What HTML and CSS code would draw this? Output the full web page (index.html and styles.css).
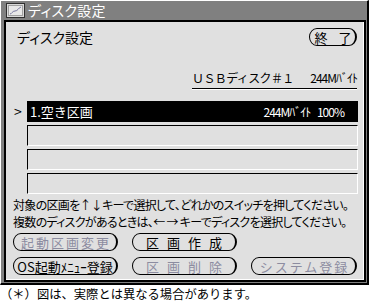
FILE: index.html
```html
<!DOCTYPE html>
<html lang="ja">
<head>
<meta charset="UTF-8">
<meta name="viewport" content="width=device-width, initial-scale=1.0">
<link rel="stylesheet" href="styles.css">
<title>ディスク設定</title>
</head>
<body>
<div class="window">
  <div class="titlebar">
    <span class="title-icon">
      <svg width="19" height="15" viewBox="0 0 19 15">
        <rect x="0.5" y="0.5" width="18" height="14" fill="#d8d8d8" stroke="#303030"/>
        <rect x="2.5" y="2.5" width="14" height="10" fill="#e8e8e8" stroke="#a0a0a0"/>
        <path d="M4 11 C6 11 6 8 9 8 C12 8 12 5 15 4" fill="none" stroke="#7878a0" stroke-width="1"/>
      </svg>
    </span>
    <span class="title">ディスク設定</span>
  </div>

  <div class="panel">
    <div class="panel-head">
      <h1>ディスク設定</h1>
      <button class="btn btn-exit">終　了</button>
    </div>

    <div class="disk-label">
      <span>ＵＳＢディスク＃１</span>
      <span class="size">244Mﾊﾞｲﾄ</span>
    </div>

    <ul class="parts">
      <li class="part selected">
        <span class="mark">&gt;</span>
        <div class="box"><span>1.空き区画</span><span class="size">244Mﾊﾞｲﾄ 100%</span></div>
      </li>
      <li class="part"><span class="mark"></span><div class="box"></div></li>
      <li class="part"><span class="mark"></span><div class="box"></div></li>
      <li class="part"><span class="mark"></span><div class="box"></div></li>
    </ul>

    <p class="help">対象の区画を↑↓キーで選択して、どれかのスイッチを押してください。<br>複数のディスクがあるときは、← → キーでディスクを選択してください。</p>

    <div class="buttons">
      <button class="btn wide disabled">起動区画変更</button>
      <button class="btn spaced">区画作成</button>
      <span></span>
      <button class="btn btn-os">OS起動ﾒﾆｭｰ登録</button>
      <button class="btn spaced disabled">区画削除</button>
      <button class="btn wide disabled">システム登録</button>
    </div>
  </div>
</div>
<p class="note">（＊）図は、実際とは異なる場合があります。</p>
</body>
</html>
```

FILE: styles.css
```css
* {
    box-sizing: border-box;
}

body {
    margin: 0;
    background: #fff;
    font-family: "Noto Sans CJK JP", sans-serif;
    color: #000;
}

.window {
    width: 369px;
    height: 285px;
    background: #808080;
    border-top: 1px solid #fff;
    border-left: 1px solid #fff;
    border-right: 2px solid #000;
    border-bottom: 2px solid #000;
    padding: 0 1px 1px 3px;
    display: flex;
    flex-direction: column;
    overflow: hidden;
}

.titlebar {
    height: 19px;
    flex: none;
    display: flex;
    align-items: center;
    gap: 3px;
    padding-left: 2px;
}

.title-icon {
    display: flex;
}

.title {
    color: #fff;
    font-size: 14px;
    line-height: 19px;
    letter-spacing: 0.3px;
    font-feature-settings: "palt";
}

.panel {
    flex: 1;
    background: #e0e0e0;
    border: 2px solid #000;
    box-shadow: inset -1px -1px 0 #fff;
    padding: 6px 0 0 7px;
}

.panel-head {
    display: flex;
    justify-content: space-between;
    align-items: center;
    height: 18px;
    padding-right: 7px;
}

h1 {
    margin: 0 0 0 4px;
    font-size: 14px;
    font-weight: 400;
    line-height: 18px;
    font-feature-settings: "palt";
}

.btn {
    height: 18px;
    padding: 0;
    background: #e0e0e0;
    border: 1px solid #000;
    border-right-width: 2px;
    border-radius: 8px / 9px;
    font-family: inherit;
    font-size: 13px;
    line-height: 15px;
    white-space: nowrap;
    overflow: hidden;
    color: #000;
}

.btn-exit {
    width: 48px;
    letter-spacing: -1px;
}

.btn.wide {
    letter-spacing: 2px;
    text-indent: 2px;
}

.btn.spaced {
    letter-spacing: 8px;
    text-indent: 8px;
}

.btn.disabled {
    color: #8c8ca0;
}

.btn-os {
    font-feature-settings: "palt";
}

.disk-label {
    margin: 20px 7px 0 179px;
    height: 23px;
    display: flex;
    justify-content: space-between;
    align-items: center;
    font-size: 12px;
    letter-spacing: -0.6px;
    white-space: nowrap;
    border-bottom: 1px solid #000;
    box-shadow: 0 1px 0 #fff;
}

.size {
    font-size: 12px;
    letter-spacing: -1px;
    word-spacing: 5px;
}

.parts {
    list-style: none;
    margin: 12px 0 0 0;
    padding: 0 6px 0 1px;
    display: flex;
    flex-direction: column;
    gap: 3px;
}

.part {
    display: flex;
    height: 21px;
}

.mark {
    width: 13px;
    font-size: 14px;
    line-height: 21px;
}

.box {
    flex: 1;
    border-top: 1px solid #000;
    border-left: 1px solid #000;
    border-right: 1px solid #fff;
    border-bottom: 1px solid #fff;
    display: flex;
    justify-content: space-between;
    align-items: center;
    padding: 0 14px 0 3px;
    font-size: 13px;
}

.selected .box {
    background: #000;
    color: #fff;
    border: none;
}

.help {
    margin: 2px 0 0 0;
    font-size: 12px;
    line-height: 17px;
    letter-spacing: -0.7px;
    white-space: nowrap;
    font-feature-settings: "palt";
}

.buttons {
    margin-top: 3px;
    display: grid;
    grid-template-columns: 105px 105px 106px;
    column-gap: 14px;
    row-gap: 6px;
}

.note {
    margin: 1px 0 0 0;
    font-size: 12.3px;
    line-height: 17px;
    white-space: nowrap;
}
```
